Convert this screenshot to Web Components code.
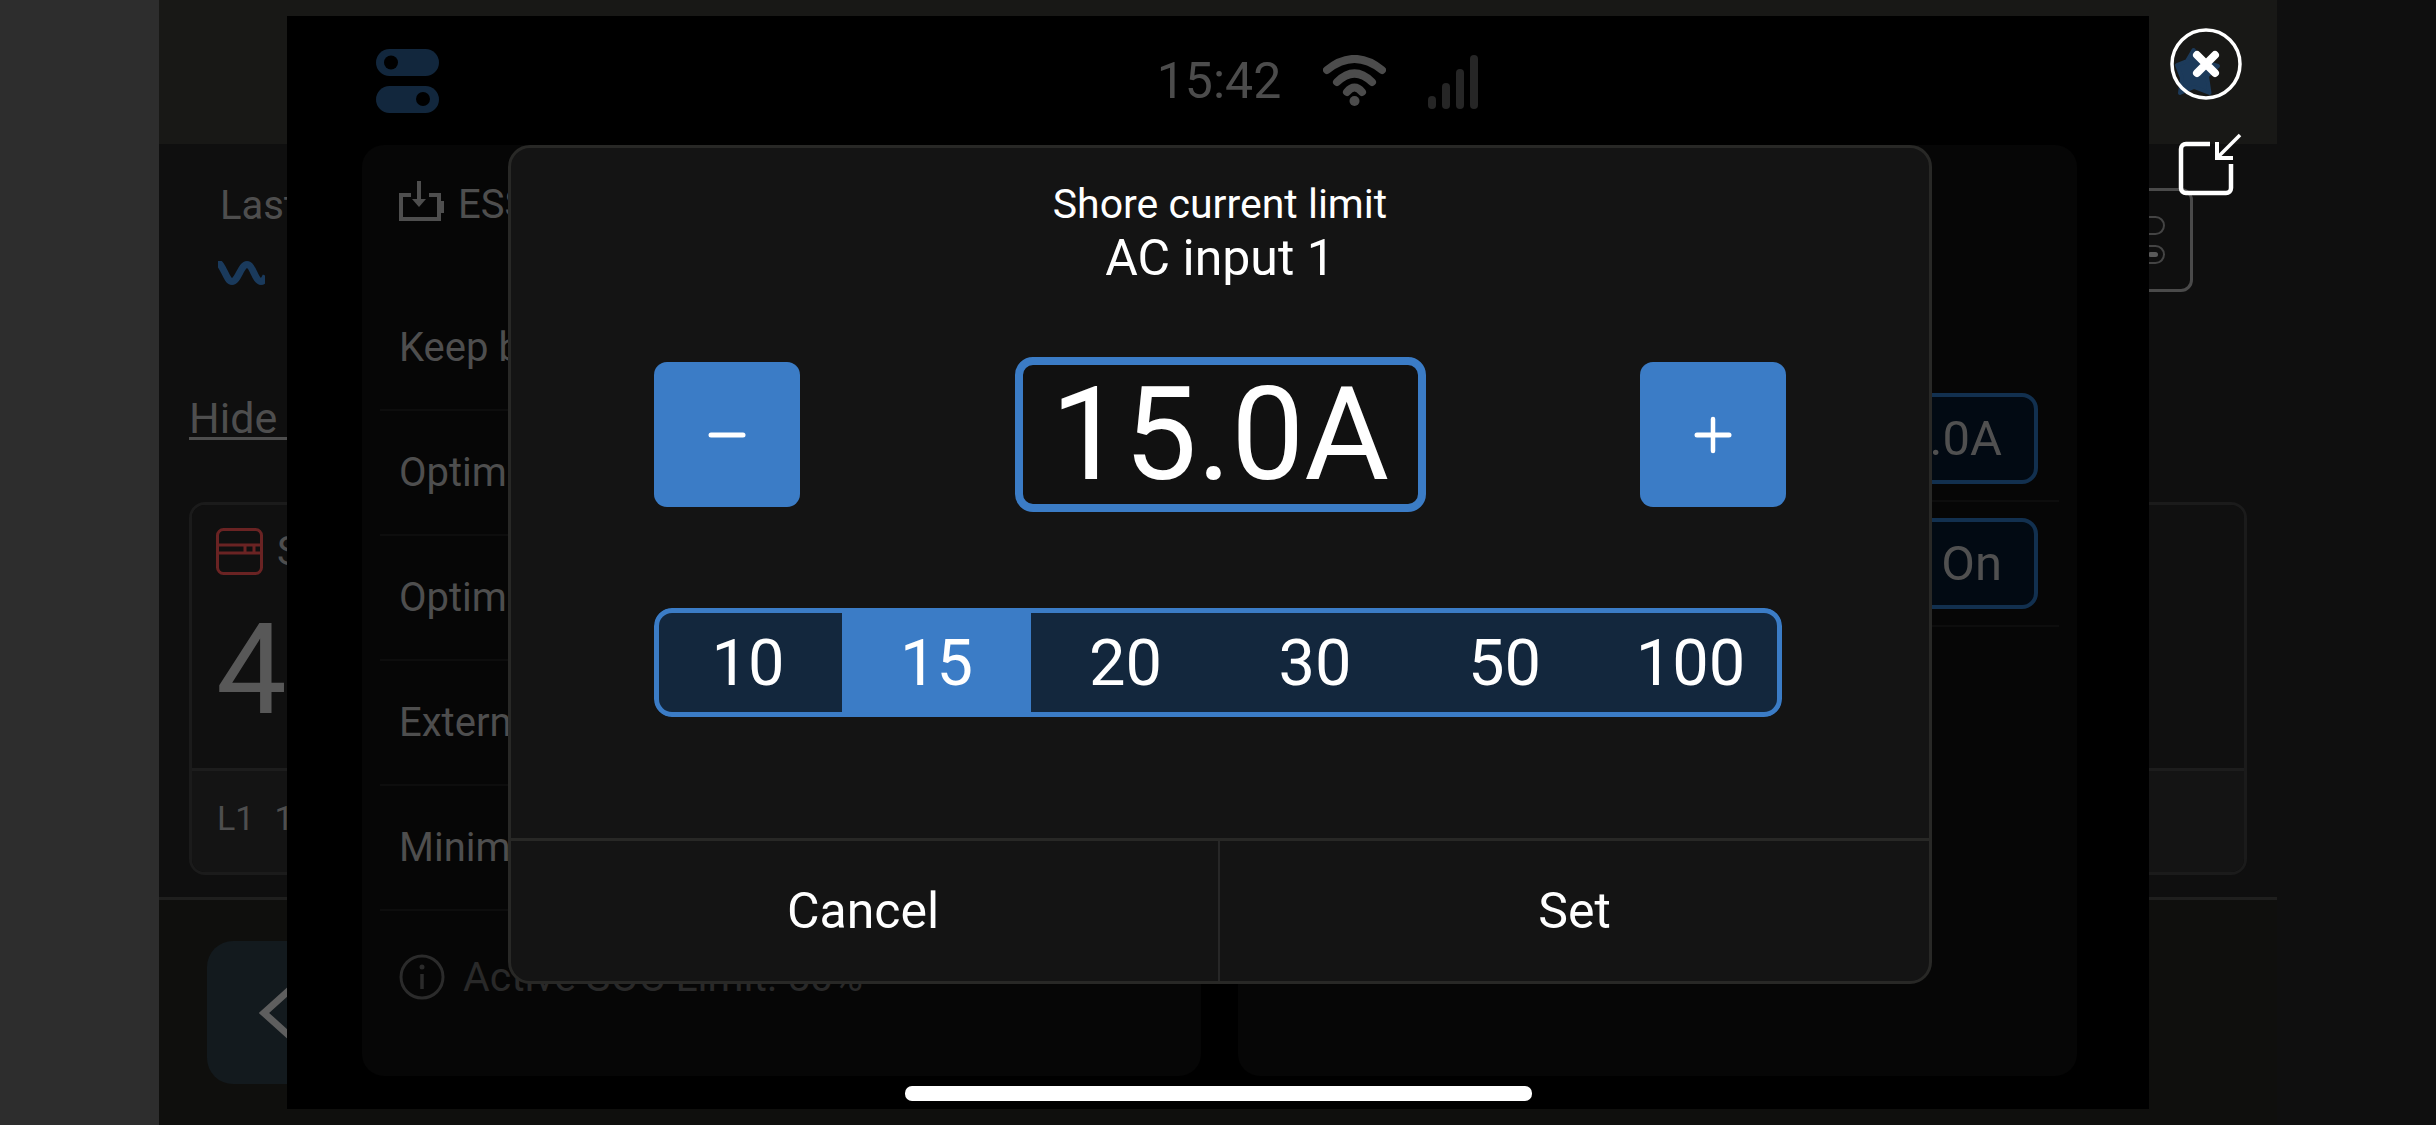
<!DOCTYPE html>
<html>
<head>
<meta charset="utf-8">
<title>Shore current limit</title>
<style>
  html, body { margin: 0; width: 2436px; height: 1125px; overflow: hidden; background: #101010; }
  body { font-family: Roboto, "Liberation Sans", sans-serif; position: relative; }
</style>
</head>
<body>
<vrm-page></vrm-page>
<remote-window>
  <shore-dialog slot="dialog" title-text="Shore current limit" subtitle="AC input 1" value="15.0A"></shore-dialog>
</remote-window>
<viewer-controls></viewer-controls>

<script>
// dimmed page that sits behind the remote console window
class VrmPage extends HTMLElement {
  constructor() {
    super();
    this.attachShadow({ mode: 'open' });
    this.shadowRoot.innerHTML = `
      <style>
        :host { display: grid; grid-template-columns: 159px 2118px 1fr; width: 2436px; height: 1125px; color: #4e4e4e; font: 400 40px/48px Roboto, sans-serif; }
        .strip { background: #2d2d2d; }
        .main { display: grid; grid-template-rows: 144px 753px 1fr; }
        .head { background: #181816; }
        .body { background: #0f0f0f; padding: 44px 30px 0; box-sizing: border-box; }
        .top { display: flex; justify-content: space-between; height: 104px; }
        .last { padding-left: 31px; margin-top: -6px; }
        .wave { display: block; margin: 31px 0 0 -2px; }
        .device { width: 200px; height: 104px; box-sizing: border-box; border: 3px solid #4a4a4a; border-radius: 12px; margin-right: 54px; display: flex; flex-direction: column; align-items: flex-end; gap: 10px; padding: 25px 25px 0 0; }
        .pill { width: 90px; height: 19px; box-sizing: border-box; border: 2px solid #444; border-radius: 10px; display: flex; align-items: center; justify-content: flex-end; padding-right: 5px; }
        .pill i { width: 10px; height: 5px; border-radius: 3px; background: #5a5a5a; }
        .pill.off i { display: none; }
        .hide { margin-top: 102px; font-size: 43px; }
        .hide span { text-decoration: underline; text-decoration-thickness: 3px; text-underline-offset: 4px; }
        .card { margin-top: 60px; height: 373px; box-sizing: border-box; border: 3px solid #1b1b1b; border-radius: 16px; display: grid; grid-template-rows: 263px 1fr; overflow: hidden; }
        .upper { padding: 23px 24px 0; background: #101010; }
        .label { display: flex; align-items: center; gap: 14px; height: 47px; }
        .label svg { flex: none; }
        .big { margin-top: 35px; font-size: 126px; line-height: 120px; color: #585858; }
        .lower { border-top: 3px solid #1d1d1d; background: #141414; padding: 27px 25px 0; display: flex; gap: 20px; font-size: 34px; line-height: 40px; }
        .foot { border-top: 3px solid #1f1f1e; background: #0f0f0d; padding: 41px 0 0 48px; }
        .back { width: 180px; height: 143px; border-radius: 26px; background: #131a1e; display: flex; align-items: center; padding-left: 52px; box-sizing: border-box; }
        .edge { background: #0f0f0f; }
      </style>
      <div class="strip"></div>
      <div class="main">
        <div class="head"></div>
        <div class="body">
          <div class="top">
            <div class="last">
              <div>Last</div>
              <svg class="wave" width="47" height="24" viewBox="0 0 47 24" fill="none"><path d="M-2 1 C5 1 8 20.500 14 20.500 C20 20.500 23 3.500 29 3.500 C35 3.500 37 20.500 43 20.500 C45 20.500 46 19 48 15" stroke="#1a3a5c" stroke-width="7"/></svg>
            </div>
            <div class="device">
              <div class="pill off"></div>
              <div class="pill"><i></i></div>
            </div>
          </div>
          <div class="hide"><span>Hide details</span></div>
          <div class="card">
            <div class="upper">
              <div class="label">
                <svg width="47" height="47" viewBox="0 0 47 47" fill="none" stroke="#6a2323" stroke-width="3"><rect x="1.500" y="1.500" width="44" height="44" rx="6"/><path d="M2 17H45M2 25H45M29 17V25M38 17V25"/></svg>
                <span>Shore</span>
              </div>
              <div class="big">4</div>
            </div>
            <div class="lower"><span>L1</span><span>1</span></div>
          </div>
        </div>
        <div class="foot">
          <div class="back">
            <svg width="40" height="64" viewBox="0 0 40 64" fill="none"><path d="M36 4 L5 32 L36 60" stroke="#5e5e5e" stroke-width="7"/></svg>
          </div>
        </div>
      </div>
      <div class="edge"></div>
    `;
  }
}

// black console window with status bar, the two panels and the home bar
class RemoteWindow extends HTMLElement {
  constructor() {
    super();
    this.attachShadow({ mode: 'open' });
    this.shadowRoot.innerHTML = `
      <style>
        :host { display: flex; flex-direction: column; position: absolute; left: 287px; top: 16px; width: 1862px; height: 1093px; background: #000; }
        .status { height: 129px; display: grid; grid-template-columns: 1fr auto 1fr; align-items: center; flex: none; }
        .switch { display: block; margin: 1px 0 0 89px; }
        .time { color: #4c4c4c; font: 400 50px/56px Roboto, sans-serif; margin-left: 2px; }
        .icons { display: flex; align-items: flex-start; padding-left: 42px; gap: 42px; height: 55px; margin-top: 3px; }
        .panels { flex: none; height: 931px; display: grid; grid-template-columns: 839px 839px; gap: 37px; padding-left: 75px; }
        .bar { width: 627px; height: 15px; border-radius: 7px; background: #fff; margin: 10px 0 0 618px; }
      </style>
      <div class="status">
        <svg class="switch" width="63" height="64" viewBox="0 0 63 64">
          <rect y="0" width="63" height="27" rx="13.500" fill="#12273d"/><circle cx="15" cy="13.500" r="7" fill="#000"/>
          <rect y="37" width="63" height="27" rx="13.500" fill="#12273d"/><circle cx="47" cy="50" r="7" fill="#000"/>
        </svg>
        <div class="time">15:42</div>
        <div class="icons">
          <svg width="63" height="51" viewBox="0 0 63 51" fill="none" stroke="#4c4c4c" stroke-width="8" stroke-linecap="round"><path d="M4 15 Q31.500 -7 59 15"/><path d="M14 27 Q31.500 10 49 27"/><path d="M24 37 Q31.500 28 39 37"/><circle cx="31.500" cy="46" r="5" fill="#4c4c4c" stroke="none"/></svg>
          <svg width="50" height="54" viewBox="0 0 50 54" fill="#262626"><rect x="0" y="41" width="8" height="13" rx="4"/><rect x="14" y="28" width="8" height="26" rx="4"/><rect x="28" y="14" width="8" height="40" rx="4"/><rect x="42" y="0" width="8" height="54" rx="4"/></svg>
        </div>
      </div>
      <div class="panels">
        <ess-panel></ess-panel>
        <limit-panel></limit-panel>
      </div>
      <div class="bar"></div>
      <slot name="dialog"></slot>
    `;
  }
}

class SettingRow extends HTMLElement {
  constructor() {
    super();
    this.attachShadow({ mode: 'open' });
    this.shadowRoot.innerHTML = `
      <style>
        :host { display: flex; align-items: center; height: 125px; box-sizing: border-box; border-bottom: 2px solid #0d0d0d; padding: 0 21px 0 19px; font: 400 40px/48px Roboto, sans-serif; color: #4e4e4e; }
        :host([end]) { justify-content: flex-end; }
      </style>
      <slot></slot>
    `;
  }
}

class EssPanel extends HTMLElement {
  constructor() {
    super();
    this.attachShadow({ mode: 'open' });
    this.shadowRoot.innerHTML = `
      <style>
        :host { display: block; background: #060606; border-radius: 22px; padding: 0 18px; font: 400 40px/48px Roboto, sans-serif; color: #4e4e4e; }
        .title { display: flex; align-items: flex-start; gap: 13px; height: 141px; box-sizing: border-box; padding: 36px 0 0 18px; }
        .note { display: flex; align-items: center; gap: 18px; padding: 42px 0 0 19px; color: #292929; font-size: 41px; }
      </style>
      <div class="title">
        <svg width="47" height="41" viewBox="0 0 47 41" fill="none" stroke="#4e4e4e" stroke-width="4"><path d="M13 14 H3 V38 H41 V14 H31"/><path d="M41 21 H45 V31 H41" fill="#4e4e4e" stroke-width="2"/><path d="M21 0 V24"/><path d="M14 18 L21 26 L28 18 Z" fill="#4e4e4e" stroke="none"/></svg>
        <span>ESS</span>
      </div>
      <setting-row>Keep batteries charged</setting-row>
      <setting-row>Optimized</setting-row>
      <setting-row>Optimized</setting-row>
      <setting-row>External control</setting-row>
      <setting-row>Minimum SOC</setting-row>
      <div class="note">
        <svg width="46" height="46" viewBox="0 0 46 46" fill="none" stroke="#2b2b2b" stroke-width="3"><circle cx="23" cy="23" r="21"/><path d="M23 20 V35" stroke-width="3.500"/><circle cx="23" cy="13" r="2.500" fill="#2b2b2b" stroke="none"/></svg>
        <span>Active SOC Limit: 50%</span>
      </div>
    `;
  }
}

class LimitPanel extends HTMLElement {
  constructor() {
    super();
    this.attachShadow({ mode: 'open' });
    this.shadowRoot.innerHTML = `
      <style>
        :host { display: block; background: #060606; border-radius: 22px; padding: 232px 18px 0; }
        .btn { box-sizing: border-box; width: 220px; height: 91px; border: 4px solid #12304f; border-radius: 16px; background: #020a13; color: #505050; font: 400 49px/56px Roboto, sans-serif; display: flex; align-items: center; justify-content: flex-end; padding-right: 32px; }
      </style>
      <setting-row end><div class="btn">15.0A</div></setting-row>
      <setting-row end><div class="btn">On</div></setting-row>
    `;
  }
}

class StepButton extends HTMLElement {
  constructor() {
    super();
    this.attachShadow({ mode: 'open' });
    const plus = this.getAttribute('kind') === 'plus';
    this.shadowRoot.innerHTML = `
      <style>
        :host { display: flex; align-items: center; justify-content: center; width: 146px; height: 145px; border-radius: 13px; background: #3b7cc6; }
      </style>
      <svg width="38" height="38" viewBox="0 0 38 38" fill="none" stroke="#fff" stroke-width="5" stroke-linecap="round">
        <path d="M3 19 H35"/>${plus ? '<path d="M19 3 V35" stroke-width="4.500"/>' : ''}
      </svg>
    `;
  }
}

class PresetBar extends HTMLElement {
  constructor() {
    super();
    this.attachShadow({ mode: 'open' });
    const values = (this.getAttribute('values') || '').split(',');
    const selected = this.getAttribute('selected');
    const cells = values.map(v => `<div class="cell${v === selected ? ' on' : ''}">${v}</div>`).join('');
    this.shadowRoot.innerHTML = `
      <style>
        :host { display: grid; grid-template-columns: 188px 189px 189px 190px 189px 183px; width: 1128px; height: 109px; box-sizing: border-box; border-radius: 18px; background: #13273d; overflow: hidden; position: relative; }
        :host::after { content: ""; position: absolute; inset: 0; border: 5px solid #3b7cc6; border-radius: 18px; pointer-events: none; }
        .cell { display: flex; align-items: center; justify-content: center; color: #fff; font: 400 65px/66px Roboto, sans-serif; }
        .cell.on { background: #3b7cc6; }
      </style>
      ${cells}
    `;
  }
}

class ShoreDialog extends HTMLElement {
  constructor() {
    super();
    this.attachShadow({ mode: 'open' });
    this.shadowRoot.innerHTML = `
      <style>
        :host { display: flex; flex-direction: column; position: absolute; left: 221px; top: 129px; width: 1424px; height: 839px; box-sizing: border-box; background: #141414; border: 3px solid #282826; border-radius: 22px; color: #fff; font-family: Roboto, sans-serif; overflow: hidden; }
        .titles { text-align: center; padding-top: 32px; }
        .t1 { font-size: 41px; line-height: 48px; }
        .t2 { font-size: 50px; line-height: 56px; margin-top: 2px; }
        .stepper { display: flex; align-items: center; justify-content: space-between; width: 1132px; margin: 71px 0 0 143px; }
        .value { box-sizing: border-box; width: 411px; height: 155px; border: 8px solid #3b7cc6; border-radius: 18px; display: flex; align-items: center; justify-content: center; font-size: 130px; line-height: 128px; background: #111; }
        preset-bar { margin: 96px 0 0 143px; }
        .actions { margin-top: auto; display: grid; grid-template-columns: 707px 1fr; height: 140px; border-top: 3px solid #282826; }
        .actions div { display: flex; align-items: center; justify-content: center; font-size: 50px; padding-right: 3px; }
        .actions div + div { border-left: 2px solid #272727; padding-right: 0; }
      </style>
      <div class="titles">
        <div class="t1">${this.getAttribute('title-text')}</div>
        <div class="t2">${this.getAttribute('subtitle')}</div>
      </div>
      <div class="stepper">
        <step-button kind="minus"></step-button>
        <div class="value">${this.getAttribute('value')}</div>
        <step-button kind="plus"></step-button>
      </div>
      <preset-bar values="10,15,20,30,50,100" selected="15"></preset-bar>
      <div class="actions"><div>Cancel</div><div>Set</div></div>
    `;
  }
}

// close + minimise buttons of the viewer, lying on top of everything
class ViewerControls extends HTMLElement {
  constructor() {
    super();
    this.attachShadow({ mode: 'open' });
    this.shadowRoot.innerHTML = `
      <style>
        :host { display: flex; flex-direction: column; position: absolute; left: 2170px; top: 28px; width: 72px; gap: 33px; }
        svg { display: block; }
      </style>
      <svg width="72" height="72" viewBox="0 0 72 72" fill="none">
        <path d="M23.500 22 L31 33 L48 38 L37 48 L39.500 65 L24 59 L10 65 L12 50 L7 37 L17 33 Z" fill="#1c3a5a" stroke="#1c3a5a" stroke-width="4" stroke-linejoin="round"/>
        <circle cx="36" cy="36" r="34" stroke="#fff" stroke-width="3.500"/>
        <path d="M27 27 L45 45 M45 27 L27 45" stroke="#fff" stroke-width="8" stroke-linecap="round"/>
      </svg>
      <svg width="72" height="64" viewBox="0 0 72 64" fill="none" stroke="#fff" stroke-width="4.500">
        <path d="M40 11 H16 a5 5 0 0 0 -5 5 V55 a5 5 0 0 0 5 5 H56 a5 5 0 0 0 5 -5 V31"/>
        <path d="M47 9 V25 H63" stroke-width="4"/>
        <path d="M47 25 L70 2" stroke-width="3.500"/>
      </svg>
    `;
  }
}

customElements.define('setting-row', SettingRow);
customElements.define('ess-panel', EssPanel);
customElements.define('limit-panel', LimitPanel);
customElements.define('step-button', StepButton);
customElements.define('preset-bar', PresetBar);
customElements.define('shore-dialog', ShoreDialog);
customElements.define('remote-window', RemoteWindow);
customElements.define('viewer-controls', ViewerControls);
customElements.define('vrm-page', VrmPage);
</script>
</body>
</html>
